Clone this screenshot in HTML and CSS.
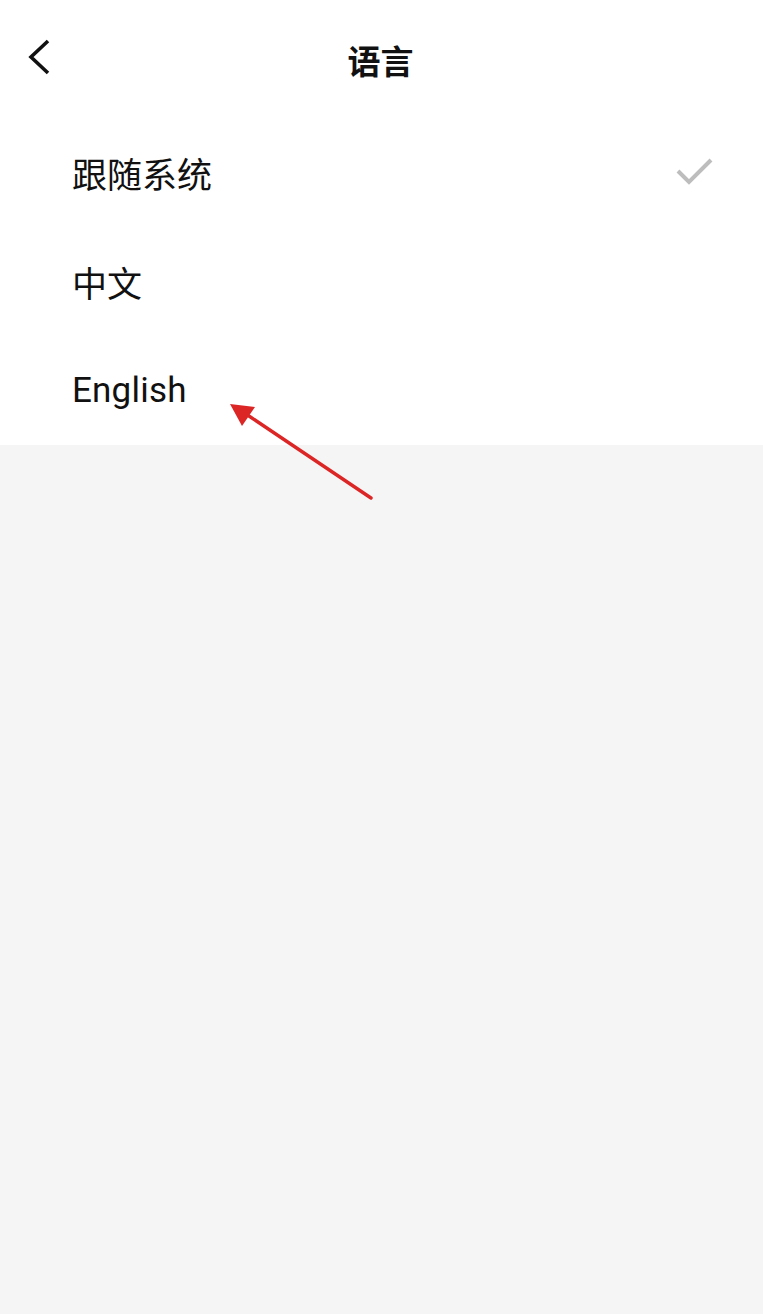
FILE: index.html
```html
<!DOCTYPE html>
<html lang="zh-CN">
<head>
<meta charset="utf-8">
<title>语言</title>
<link rel="stylesheet" href="styles.css">
</head>
<body>
<div class="page">
  <div class="top">
    <header class="header">
      <button class="back" aria-label="返回">
        <svg width="30" height="40" viewBox="0 0 30 40"><polyline points="20,3 3,19 20,35" fill="none" stroke="#111" stroke-width="3.6" stroke-linecap="butt" stroke-linejoin="miter"/></svg>
      </button>
      <h1 class="title">语言</h1>
    </header>
    <ul class="list">
      <li class="item">
        <span class="label">跟随系统</span>
        <svg class="check" width="40" height="32" viewBox="0 0 40 32"><polyline points="3,14 14,25 36,3" fill="none" stroke="#bdbdbd" stroke-width="4"/></svg>
      </li>
      <li class="item"><span class="label">中文</span></li>
      <li class="item"><span class="label en">English</span></li>
    </ul>
  </div>
  <svg class="annot" width="763" height="1314" viewBox="0 0 763 1314">
    <line x1="371" y1="498" x2="246" y2="414" stroke="#dc2626" stroke-width="3.4" stroke-linecap="round"/>
    <polygon points="230,404 255,407 242,426" fill="#dc2626"/>
  </svg>
</div>
</body>
</html>
```
FILE: styles.css
```css
html, body {
  margin: 0;
  padding: 0;
  background: #f5f5f5;
}
.page {
  position: relative;
  width: 763px;
  height: 1314px;
  background: #f5f5f5;
  font-family: Roboto, "Noto Sans CJK SC", sans-serif;
  color: #111;
}
.top {
  background: #fff;
}
.header {
  height: 118px;
  display: flex;
  align-items: center;
  justify-content: center;
  position: relative;
}
.back {
  position: absolute;
  left: 28px;
  top: 38px;
  width: 30px;
  height: 40px;
  padding: 0;
  border: 0;
  background: none;
  display: block;
}
.back svg { display: block; }
.title {
  margin: 0;
  font-family: "Noto Sans CJK SC", sans-serif;
  font-size: 33px;
  font-weight: 700;
  line-height: 1;
  letter-spacing: 0;
  margin-top: 2px;
  margin-left: -2px;
}
.list {
  list-style: none;
  margin: 0;
  padding: 0;
}
.item {
  height: 109px;
  display: flex;
  align-items: center;
  justify-content: space-between;
  padding: 0 48px 0 72px;
}
.label {
  font-family: "Noto Sans CJK SC", sans-serif;
  font-size: 35px;
  line-height: 1;
  font-weight: 400;
}
.label.en {
  font-family: Roboto, sans-serif;
  font-size: 35px;
  letter-spacing: 0.2px;
}
.check {
  display: block;
  margin-top: 1px;
}
.annot {
  position: absolute;
  left: 0;
  top: 0;
  pointer-events: none;
}
```
